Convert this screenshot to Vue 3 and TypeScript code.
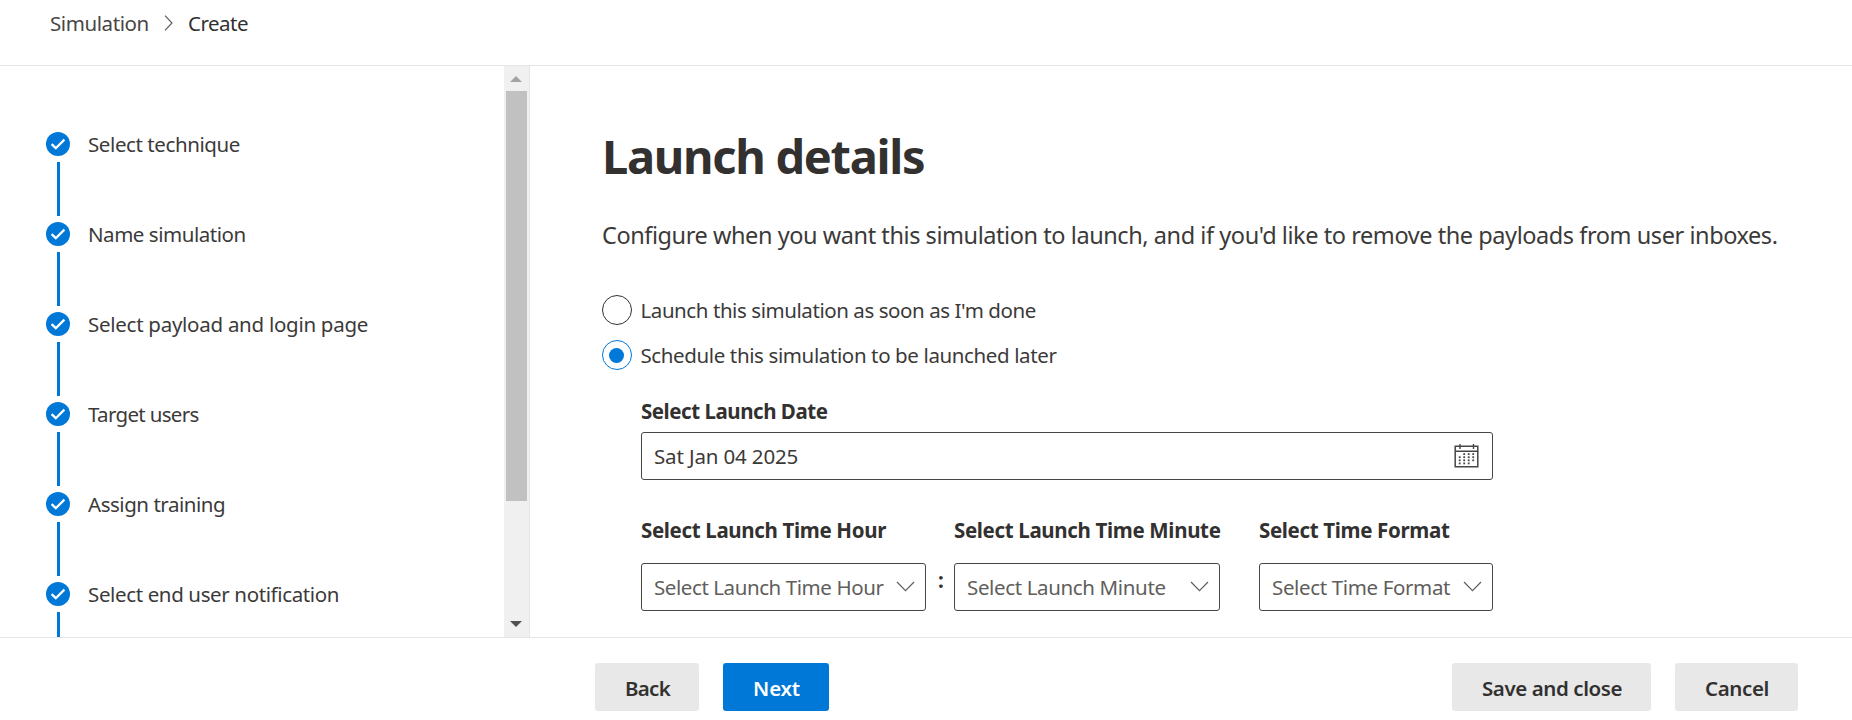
<script setup lang="ts">
import { ref } from 'vue'

interface Step { label: string; tracking: number }
interface Option { label: string; tracking: number }
interface TimeField { key: string; label: string; placeholder: string }

const steps: Step[] = [
  { label: 'Select technique', tracking: -0.41 },
  { label: 'Name simulation', tracking: -0.46 },
  { label: 'Select payload and login page', tracking: -0.27 },
  { label: 'Target users', tracking: -0.68 },
  { label: 'Assign training', tracking: -0.46 },
  { label: 'Select end user notification', tracking: -0.37 },
]

const options: Option[] = [
  { label: "Launch this simulation as soon as I'm done", tracking: -0.43 },
  { label: 'Schedule this simulation to be launched later', tracking: -0.38 },
]
const selected = ref(1)

const timeFields: TimeField[] = [
  { key: 'hour', label: 'Select Launch Time Hour', placeholder: 'Select Launch Time Hour' },
  { key: 'minute', label: 'Select Launch Time Minute', placeholder: 'Select Launch Minute' },
  { key: 'format', label: 'Select Time Format', placeholder: 'Select Time Format' },
]

const dots: [number, number][] = []
for (let row = 0; row < 4; row++) {
  for (let col = 0; col < 4; col++) {
    if ((row === 0 && col === 0) || (row === 3 && col === 3)) continue
    dots.push([4.8 + col * 4.5, 9.2 + row * 3.1])
  }
}
</script>

<template>
  <div class="page">
    <header class="header">
      <span class="crumb">Simulation</span>
      <svg class="crumb-arrow" width="10" height="16" viewBox="0 0 10 16"><path d="M1 .7 8 8 1 15.3" /></svg>
      <span class="crumb current">Create</span>
    </header>

    <div class="body">
      <nav class="steps">
        <div v-for="step in steps" :key="step.label" class="step">
          <div class="step-row">
            <svg width="24" height="24" viewBox="0 0 24 24">
              <circle cx="12" cy="12" r="12" fill="#0078d7" />
              <path d="M5.6 12.2 9.8 16.2 18.4 7.6" fill="none" stroke="#fff" stroke-width="2.3" />
            </svg>
            <span class="step-label" :style="{ letterSpacing: step.tracking + 'px' }">{{ step.label }}</span>
          </div>
          <div class="step-line"></div>
        </div>
      </nav>
      <div class="scrollbar">
        <svg class="arrow-up" width="12" height="6" viewBox="0 0 12 6"><path d="M0 6 6 0l6 6z" fill="#a3a3a3" /></svg>
        <div class="thumb"></div>
        <svg class="arrow-down" width="12" height="6" viewBox="0 0 12 6"><path d="M0 0h12L6 6z" fill="#505050" /></svg>
      </div>

      <main class="main">
        <h1>Launch details</h1>
        <p class="intro">Configure when you want this simulation to launch, and if you'd like to remove the payloads from user inboxes.</p>
        <div class="options">
          <div
            v-for="(option, i) in options"
            :key="option.label"
            class="option"
            role="radio"
            :aria-checked="selected === i"
            @click="selected = i"
          >
            <span class="radio" :class="{ on: selected === i }"></span>
            <span class="option-label" :style="{ letterSpacing: option.tracking + 'px' }">{{ option.label }}</span>
          </div>
        </div>

        <section class="schedule">
          <div class="label date-label">Select Launch Date</div>
          <div class="field date">
            <span>Sat Jan 04 2025</span>
            <svg width="25" height="24" viewBox="0 0 25 24" fill="none" stroke="#484644">
              <path d="M1.2 2.2h22.6v20.6H1.2z" stroke-width="1.5" />
              <path d="M1 7.2h23M6 0v5M19.5 0v5" stroke-width="1.4" />
              <rect v-for="([x, y], i) in dots" :key="i" :x="x" :y="y" width="1.8" height="1.8" fill="#484644" stroke="none" />
            </svg>
          </div>
          <div class="times">
            <div v-for="f in timeFields" :key="f.key" class="time" :class="f.key">
              <div class="label">{{ f.label }}</div>
              <div class="field select">
                <span>{{ f.placeholder }}</span>
                <svg width="19" height="11" viewBox="0 0 19 11"><path d="M1 1 9.5 9.6 18 1" /></svg>
              </div>
            </div>
            <div class="colon">:</div>
          </div>
        </section>
      </main>
    </div>

    <footer class="footer">
      <button class="btn back">Back</button>
      <button class="btn next">Next</button>
      <button class="btn save">Save and close</button>
      <button class="btn cancel">Cancel</button>
    </footer>
  </div>
</template>

<style>
body { margin: 0; overflow: hidden; }
</style>

<style scoped>
.page {
  display: flex;
  flex-direction: column;
  width: 1852px;
  height: 720px;
  overflow: hidden;
  background: #fff;
  color: #3b3a39;
  font: 20.5px/28px "Noto Sans", "Open Sans", sans-serif;
  white-space: nowrap;
}
.page * { box-sizing: border-box; }
.header {
  display: flex;
  align-items: flex-start;
  height: 66px;
  padding: 9px 0 0 50px;
  border-bottom: 1px solid #e5e5e5;
  flex: none;
}
.crumb { width: 114px; letter-spacing: -0.42px; color: #484644; }
.crumb.current { color: #323130; letter-spacing: -0.5px; }
.crumb-arrow { margin: 6px 14px 0 0; fill: none; stroke: #605e5c; stroke-width: 1.2; }
.body { display: flex; height: 571px; flex: none; }
.steps { width: 504px; padding: 66px 0 0 46px; overflow: hidden; }
.step { height: 90px; }
.step-row { display: flex; align-items: center; gap: 18px; height: 24px; }
.step-line { width: 3px; height: 54px; margin: 6px 0 0 11px; background: #0078d7; }
.scrollbar {
  display: flex;
  flex-direction: column;
  align-items: center;
  width: 26px;
  padding: 10px 1px 10px 0;
  border-right: 1px solid #e5e5e5;
  background: #f0f0f0;
}
.thumb { width: 21px; height: 410px; margin-top: 9px; background: #c1c1c1; }
.arrow-up, .arrow-down { flex: none; }
.arrow-down { margin-top: auto; }
.main { padding: 60px 0 0 72px; }
h1 { margin: 0; font-size: 47px; line-height: 60px; font-weight: 700; letter-spacing: -1.3px; color: #323130; }
.intro { margin: 33px 0 0; font-size: 23.5px; line-height: 32px; letter-spacing: -0.435px; }
.options { display: flex; flex-direction: column; gap: 15px; margin-top: 44px; }
.option { display: flex; align-items: center; gap: 8.5px; height: 30px; }
.radio {
  display: flex;
  align-items: center;
  justify-content: center;
  width: 30px;
  height: 30px;
  border: 1px solid #323130;
  border-radius: 50%;
}
.radio.on { border-color: #0078d7; }
.radio.on::after { content: ''; width: 15px; height: 15px; margin-right: 1px; border-radius: 50%; background: #0078d7; }
.schedule { width: 852px; margin: 27px 0 0 39px; }
.label { font-weight: 700; color: #323130; letter-spacing: -0.34px; }
.date-label { letter-spacing: -0.46px; }
.field {
  display: flex;
  align-items: center;
  justify-content: space-between;
  height: 48px;
  padding-left: 12px;
  border: 1px solid #484644;
  border-radius: 3px;
}
.date { margin-top: 7px; padding-right: 13px; letter-spacing: -0.14px; }
.times {
  display: grid;
  grid-template-columns: 285px 28px 266px 39px 234px;
  margin-top: 36px;
}
.time { grid-row: 1; }
.hour { grid-column: 1; }
.minute { grid-column: 3; }
.format { grid-column: 5; }
.select { margin-top: 19px; padding-right: 10px; color: #605e5c; letter-spacing: -0.36px; }
.hour .select { letter-spacing: -0.42px; }
.select svg { margin-top: -2px; fill: none; stroke: #605e5c; stroke-width: 1.2; }
.colon {
  grid-row: 1;
  grid-column: 2;
  padding: 47px 0 0 2px;
  text-align: center;
  font-weight: 700;
  line-height: 34px;
  color: #323130;
}
.footer {
  display: flex;
  flex: 1;
  padding: 25px 54px 0 595px;
  border-top: 1px solid #e5e5e5;
}
.btn {
  height: 48px;
  padding: 1px 0 0 1px;
  border: 0;
  border-radius: 3px;
  background: #e8e8e8;
  color: #323130;
  font: 600 20.5px/28px "Noto Sans", "Open Sans", sans-serif;
}
.back { width: 104px; letter-spacing: -0.7px; }
.next { width: 106px; margin-left: 24px; background: #0078d7; color: #fff; letter-spacing: -0.2px; }
.save { width: 199px; margin-left: auto; letter-spacing: -0.42px; }
.cancel { width: 123px; margin-left: 24px; letter-spacing: -0.4px; }
</style>
